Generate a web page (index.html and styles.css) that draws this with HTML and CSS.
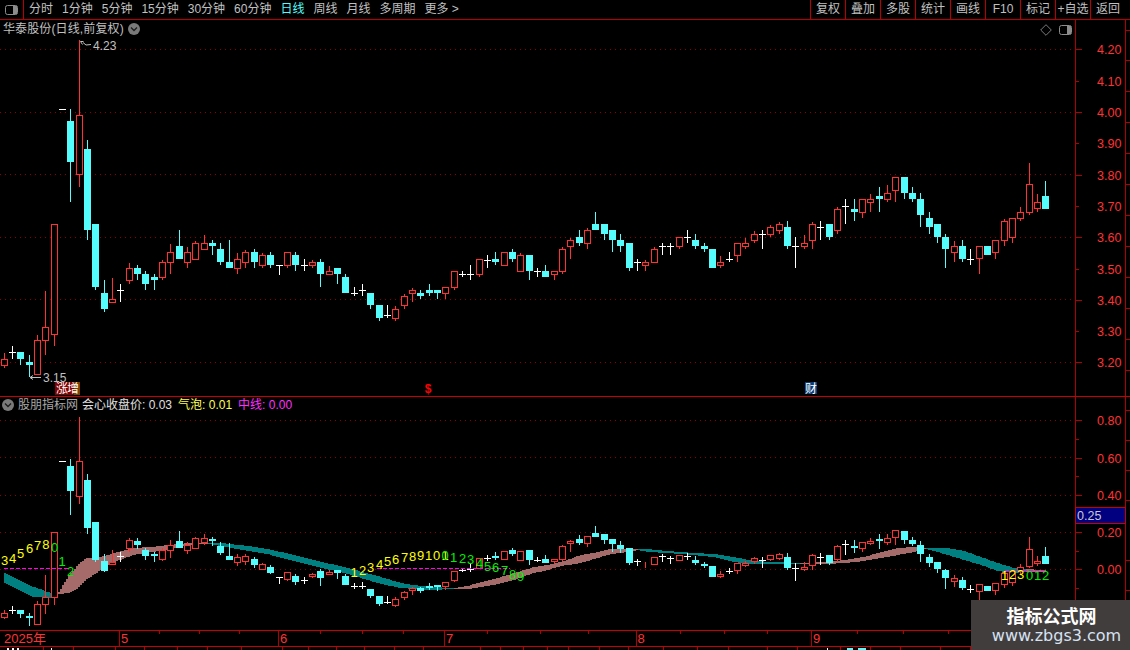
FILE: index.html
```html
<!DOCTYPE html>
<html lang="zh-CN">
<head>
<meta charset="utf-8">
<title>华泰股份</title>
<link rel="stylesheet" href="styles.css">
</head>
<body>
<div class="page">
  <header class="toolbar">
    <div class="toolbar-icon">
      <svg class="toggle" viewBox="0 0 13 10"><rect class="toggle-box" x="0.5" y="0.5" width="12" height="9" rx="2"/><rect class="toggle-fill" x="8" y="1" width="4" height="8"/></svg>
    </div>
    <nav class="periods">
      <span>分时</span><span>1分钟</span><span>5分钟</span><span>15分钟</span><span>30分钟</span><span>60分钟</span>
      <span class="active">日线</span><span>周线</span><span>月线</span><span>多周期</span><span>更多 &gt;</span>
    </nav>
    <div class="tools">
      <span>复权</span><span>叠加</span><span>多股</span><span>统计</span><span>画线</span><span>F10</span><span>标记</span><span>+自选</span><span>返回</span>
    </div>
  </header>

  <section class="pane pane-upper">
    <svg id="upper" class="chart" viewBox="0 20 1130 376" width="1130" height="376"></svg>
    <div class="pane-title title-upper">
      <span class="stock-name">华泰股份(日线,前复权)</span>
      <svg class="chev" viewBox="0 0 12 12"><circle class="chev-bg" cx="6" cy="6" r="6"/><path class="chev-mark" d="M3 4.5 6 7.5 9 4.5"/></svg>
    </div>
    <div class="pane-tools">
      <svg class="diamond" viewBox="0 0 12 12"><path class="diamond-mark" d="M6 .7 11.3 6 6 11.3 .7 6Z"/></svg>
      <svg class="toggle" viewBox="0 0 13 10"><rect class="toggle-box" x="0.5" y="0.5" width="12" height="9" rx="2"/><rect class="toggle-fill" x="8" y="1" width="4" height="8"/></svg>
    </div>
  </section>

  <section class="pane pane-lower">
    <svg id="lower" class="chart" viewBox="0 397 1130 233" width="1130" height="233"></svg>
    <div class="pane-title title-lower">
      <svg class="chev" viewBox="0 0 12 12"><circle class="chev-bg" cx="6" cy="6" r="6"/><path class="chev-mark" d="M3 4.5 6 7.5 9 4.5"/></svg>
      <span class="ind-name">股朋指标网</span>
      <span class="ind-value">会心收盘价: 0.03</span>
      <span class="ind-yellow">气泡: 0.01</span>
      <span class="ind-magenta">中线: 0.00</span>
    </div>
  </section>

  <section class="date-axis">
    <svg id="dates" class="chart" viewBox="0 631 1130 15" width="1130" height="15"></svg>
  </section>
  <svg id="status" class="chart" viewBox="0 647 1130 3" width="1130" height="3"></svg>

  <aside class="watermark">
    <div class="wm-title">指标公式网</div>
    <div class="wm-url">www.zbgs3.com</div>
  </aside>
</div>
<script src="script.js"></script>
</body>
</html>
```

FILE: styles.css
```css
* { box-sizing: border-box; }
html, body { margin: 0; padding: 0; background: #000; }
body {
  width: 1130px;
  height: 650px;
  overflow: hidden;
  font-family: "Liberation Sans", "Noto Sans CJK SC", sans-serif;
  font-size: 12px;
  color: #c0c0c0;
}
.page { position: relative; width: 1130px; height: 650px; display: flex; flex-direction: column; }

.toolbar { display: flex; align-items: stretch; height: 20px; border-bottom: 1px solid #b80000; flex: none; }
.toolbar-icon { width: 24px; border-right: 1px solid #b80000; display: flex; align-items: center; justify-content: center; padding-right: 1px; }
.toggle { width: 13px; height: 10px; display: block; }
.toggle-box { fill: #000; stroke: #8c8c8c; stroke-width: 1; }
.toggle-fill { fill: #8c8c8c; }
.periods { display: flex; align-items: center; gap: 9px; padding-left: 5px; white-space: nowrap; line-height: 19px; }
.periods .active { color: #54fcfc; }
.tools { margin-left: auto; margin-right: 5px; display: flex; }
.tools span { width: 35px; border-left: 1px solid #b80000; text-align: center; line-height: 19px; white-space: nowrap; }

.pane { position: relative; flex: none; border-bottom: 1px solid #c80000; }
.pane-upper { height: 377px; }
.pane-lower { height: 234px; }
.chart { display: block; }
.pane-title { position: absolute; left: 0; display: flex; align-items: center; white-space: nowrap; line-height: 16px; }
.title-upper { top: 1px; padding-left: 3px; gap: 4px; }
.stock-name { letter-spacing: 0.12px; }
.title-lower { top: 0; padding-left: 2px; gap: 4px; }
.chev { width: 12px; height: 12px; flex: none; }
.chev-bg { fill: #7a7a7a; }
.chev-mark { fill: none; stroke: #1c1c1c; stroke-width: 1.3; }
.ind-name { color: #a8a8a8; }
.ind-value { color: #e0e0e0; }
.ind-yellow { color: #ffff54; margin-left: 2px; }
.ind-magenta { color: #ff30ff; margin-left: 2px; }
.pane-tools { position: absolute; top: 4px; right: 58px; display: flex; align-items: center; gap: 7px; }
.diamond { width: 12px; height: 12px; }
.diamond-mark { fill: none; stroke: #7a7a7a; stroke-width: 1; }

.date-axis { flex: none; height: 16px; border-bottom: 1px solid #c80000; }
.watermark {
  position: absolute; left: 971px; top: 600px; width: 159px; height: 50px;
  background: #423d3d; text-align: center; color: #fff;
}
.wm-title { font-family: "Noto Sans CJK SC", sans-serif; font-weight: 700; font-size: 18px; line-height: 22px; margin-top: 4px; margin-left: 2px; }
.wm-url { font-family: "DejaVu Sans", sans-serif; font-size: 16px; line-height: 20px; color: #d6e2f2; margin-left: 12px; white-space: nowrap; }

/* chart marks */
.red-wick, .red-dash { fill: #ff3232; }
.red-body { fill: #000; stroke: #ff3232; stroke-width: 1; }
.cyan { fill: #54fcfc; }
.white { fill: #fff; }
.grid { stroke: #8c0000; stroke-width: 1; stroke-dasharray: 1 4; }
.axis { stroke: #b00000; stroke-width: 1; }
.axis-label { fill: #ff3232; font-size: 12.5px; font-family: "Liberation Sans", sans-serif; }
.date-label { fill: #ff3232; font-size: 13px; font-family: "Liberation Sans", "Noto Sans CJK SC", sans-serif; }
.note { fill: #c0c0c0; font-size: 12px; font-family: "Liberation Sans", sans-serif; }
.note-line { fill: none; stroke: #c0c0c0; stroke-width: 1; }
.band-teal { fill: #008080; }
.band-pink { fill: #a56b6b; }
.mid-dash { stroke: #ff00ff; stroke-width: 1; stroke-dasharray: 4 2; }
.digit { font-size: 13px; font-family: "Liberation Sans", sans-serif; text-anchor: middle; }
.digit-y { fill: #ffff00; }
.digit-g { fill: #00f000; }
.tag-red { fill: #820000; }
.tag-brown { fill: #804000; }
.tag-blue { fill: #0a3c78; }
.tag-text { fill: #fff; font-size: 12px; font-family: "Noto Sans CJK SC", sans-serif; }
.tag-dollar { fill: #ff0000; font-size: 12px; font-weight: 700; font-family: "Liberation Mono", monospace; text-anchor: middle; }
.value-box { fill: #000080; stroke: #c80000; stroke-width: 1; }
.value-text { fill: #c8c8c8; font-size: 12.5px; font-family: "Liberation Sans", sans-serif; }
```

FILE: script.js
```js
(function () {
var NS = "http://www.w3.org/2000/svg";
function el(svg, name, cls, attrs, text) {
  var n = document.createElementNS(NS, name);
  if (cls) n.setAttribute("class", cls);
  for (var k in attrs) n.setAttribute(k, attrs[k]);
  if (text !== undefined) n.textContent = text;
  svg.appendChild(n);
  return n;
}
function colX(i) { return Math.floor(4 + i * 25 / 3); }

/* r/c: [kind, bodyTop, bodyBottom, high, low]  w: [kind, bar, high, low]  d: [kind, y] */
var upperData = [
["r",359,366,353,368],["w",352,346,359],["c",352,359,352,365],["c",362,365,355,377],["r",340,375,335,375],["r",327,341,291,355],["r",224,335,224,346],["d",109],["c",121,162,109,202],["r",115,175,40,187],
["c",149,230,140,240],["c",224,287,224,290],["c",293,309,280,312],["r",299,303,278,303],["w",290,284,302],["r",268,281,263,284],["c",268,274,265,280],["c",274,284,271,290],["c",277,280,274,290],["r",262,278,260,280],
["r",252,263,244,274],["c",246,259,230,259],["r",252,263,247,268],["r",243,260,241,260],["r",243,250,235,250],["c",243,246,240,255],["c",249,262,243,265],["c",262,268,240,268],["r",259,269,253,274],["r",252,263,250,268],
["c",252,262,249,268],["r",255,266,253,268],["c",255,265,252,268],["w",265,265,275],["r",252,266,252,268],["c",255,265,252,271],["w",265,259,271],["r",262,266,260,268],["c",262,274,259,287],["r",271,275,266,275],
["c",268,274,268,284],["c",277,293,274,293],["w",293,287,296],["w",290,284,296],["c",293,305,293,309],["c",305,318,305,321],["w",315,305,318],["r",309,319,306,321],["r",296,306,294,309],["r",290,294,288,302],
["c",293,296,290,299],["c",290,293,284,296],["c",290,293,290,299],["r",287,294,287,299],["r",271,288,271,290],["w",274,271,277],["w",274,265,280],["r",259,275,259,277],["w",260,255,268],["c",259,262,252,265],
["r",252,266,252,266],["c",252,259,249,262],["r",255,272,253,272],["c",255,271,255,280],["w",271,268,277],["c",271,277,265,277],["r",271,275,271,280],["r",249,272,247,274],["r",240,247,238,259],["c",237,243,230,246],
["r",230,244,228,249],["c",224,230,212,230],["c",224,234,224,240],["c",230,240,230,252],["c",240,246,234,252],["c",243,268,243,271],["w",262,259,271],["r",262,266,260,271],["r",249,263,247,263],["w",246,243,255],
["w",246,243,255],["r",237,247,237,249],["w",237,230,243],["c",240,246,234,249],["c",246,249,243,252],["c",249,268,249,268],["r",262,266,256,268],["w",259,252,262],["r",243,256,243,262],["r",243,247,238,249],
["r",234,241,231,243],["w",234,230,249],["r",227,235,225,237],["r",224,231,222,234],["c",227,246,221,249],["w",246,237,268],["r",243,247,235,249],["r",224,241,222,249],["w",227,221,240],["c",224,237,224,240],
["r",209,231,207,234],["w",206,199,224],["c",209,212,199,221],["r",199,213,199,218],["r",199,203,194,212],["c",196,199,187,212],["r",193,200,185,202],["r",177,191,177,202],["c",177,193,177,199],["c",193,199,187,202],
["c",199,215,193,227],["c",218,227,212,234],["c",224,237,224,243],["c",237,249,234,268],["r",246,253,241,262],["c",246,259,240,262],["w",259,249,265],["r",246,259,246,274],["c",246,255,246,255],["r",240,253,240,259],
["r",221,241,219,246],["r",218,238,218,243],["r",212,219,207,221],["r",184,213,163,215],["r",202,209,194,212],["c",196,209,181,209]
];
var lowerData = [
["r",613,618,610,619],["w",610,606,614],["c",610,614,610,618],["c",616,618,613,626],["r",604,625,601,625],["r",597,605,575,614],["r",532,598,532,605],["d",461],["c",466,491,459,515],["r",461,497,417,504],
["c",480,528,474,534],["c",522,560,522,562],["c",561,571,554,572],["r",562,565,550,565],["w",556,552,562],["r",540,549,538,552],["c",541,545,538,549],["c",550,556,548,560],["c",554,556,552,562],["r",550,560,548,561],
["r",545,551,540,558],["c",541,548,531,548],["r",545,551,542,554],["r",538,549,537,549],["r",538,543,534,545],["c",539,541,537,546],["c",546,553,542,555],["c",556,560,543,560],["r",557,563,554,566],["r",556,562,554,565],
["c",559,565,557,568],["r",564,570,563,570],["c",567,573,565,574],["w",577,577,584],["r",572,580,572,581],["c",576,582,574,585],["w",580,577,584],["r",574,577,573,578],["c",571,578,569,586],["r",572,575,570,575],
["c",570,573,570,579],["c",576,585,574,585],["w",586,583,589],["w",586,582,589],["c",589,596,589,598],["c",596,604,596,606],["w",602,596,604],["r",599,606,597,607],["r",592,598,591,600],["r",588,591,587,595],
["c",588,591,587,593],["c",586,588,583,590],["c",585,587,585,591],["r",582,587,582,590],["r",571,581,571,582],["w",570,568,572],["w",569,564,572],["r",558,569,558,569],["w",558,555,561],["c",556,558,552,560],
["r",551,560,551,560],["c",550,554,548,556],["r",551,561,551,561],["c",550,560,550,565],["w",560,557,562],["c",559,563,555,563],["r",559,562,559,564],["r",546,560,545,561],["r",541,544,540,552],["c",539,543,535,545],
["r",536,544,536,547],["c",533,537,526,537],["c",534,540,534,544],["c",539,544,539,552],["c",545,549,541,553],["c",548,563,548,565],["w",561,559,566],["r",563,564,562,568],["r",557,565,557,565],["w",556,554,562],
["w",558,556,564],["r",555,561,555,561],["w",556,553,560],["c",560,563,556,565],["c",564,566,562,568],["c",566,577,566,577],["r",574,577,571,578],["w",571,568,574],["r",563,571,563,574],["r",563,566,561,567],
["r",558,562,557,564],["w",560,557,568],["r",555,560,555,561],["r",554,559,553,560],["c",557,568,553,570],["w",568,563,581],["r",567,570,562,571],["r",555,566,554,570],["w",557,553,565],["c",555,563,555,565],
["r",546,560,545,562],["w",544,540,555],["c",546,548,540,553],["r",542,549,542,552],["r",541,544,538,545],["c",539,541,534,549],["r",538,543,534,545],["r",530,538,530,545],["c",531,540,531,544],["c",540,544,537,546],
["c",545,554,541,562],["c",557,563,554,567],["c",562,569,562,573],["c",570,578,569,589],["r",578,582,575,587],["c",580,588,577,590],["w",589,585,593],["r",584,592,584,600],["c",586,591,586,591],["r",583,591,583,595],
["r",573,585,571,588],["r",571,583,571,586],["r",567,571,564,574],["r",549,567,537,568],["r",561,564,556,566],["c",556,564,547,564]
];
/* indicator band key points: x, top, bottom */
var band = [
[4,573,583],[33,587,597],[50,593,598],[58,592,594],[67,577,593],[77,565,588],[85,558,580],[100,557,570],[113,553,562],[133,548,555],[150,547,552],[167,545,550],[187,543,545],[207,543,544],
[220,543,546],[247,546,551],[267,549,554],[280,552,558],[313,560,566],[347,568,574],[380,577,584],[400,583,588],[413,585,589],[430,587,590],[453,588,589],
[467,586,589],[480,582,587],[497,578,584],[513,573,580],[533,567,573],[547,565,570],[560,562,566],[580,555,563],[593,553,559],[610,549,554],[627,549,552],[637,549,550],
[647,549,552],[667,551,553],[693,553,555],[713,554,557],[733,557,562],[753,561,564],[773,562,564],[793,563,564],[827,562,564],
[843,560,563],[863,557,561],[880,552,558],[897,548,555],[913,547,552],[923,548,549],
[930,548,550],[947,548,555],[963,551,560],[980,557,565],[997,563,571],[1013,568,573],[1020,569,572],[1045,570,572]
];
var pinkSpans = [[55,207],[453,637],[800,925],[1025,1046]];

function drawCandles(svg, data) {
  data.forEach(function (d, i) {
    var x = colX(i), k = d[0];
    if (k === "d") { el(svg, "rect", "white", {x: x - 3, y: d[1], width: 7, height: 1}); return; }
    if (k === "w") {
      el(svg, "rect", "white", {x: x, y: d[2], width: 1, height: d[3] - d[2]});
      el(svg, "rect", "white", {x: x - 3, y: d[1], width: 7, height: 1});
      return;
    }
    var cls = k === "r" ? "red-wick" : "cyan";
    el(svg, "rect", cls, {x: x, y: d[3], width: 1, height: d[4] - d[3]});
    if (k === "r") el(svg, "rect", "red-body", {x: x - 2.5, y: d[1] + 0.5, width: 6, height: d[2] - d[1] - 1});
    else el(svg, "rect", "cyan", {x: x - 3, y: d[1], width: 7, height: d[2] - d[1]});
  });
}
function hline(svg, cls, x1, x2, y) { el(svg, "line", cls, {x1: x1, x2: x2, y1: y, y2: y}); }
function vline(svg, cls, x, y1, y2) { el(svg, "line", cls, {x1: x, x2: x, y1: y1, y2: y2}); }

/* ---- upper pane ---- */
var up = document.getElementById("upper");
[49, 112, 174, 237, 299, 362].forEach(function (y) { hline(up, "grid", 0, 1075, y + 0.5); });
vline(up, "axis", 1075.5, 20, 396);
vline(up, "axis", 1125.5, 20, 396);
var upperLabels = ["4.20","4.10","4.00","3.90","3.80","3.70","3.60","3.50","3.40","3.30","3.20"];
upperLabels.forEach(function (t, i) {
  var y = Math.round(49.4 + i * 31.3);
  hline(up, "axis", 1076, i % 2 ? 1079 : 1082, y + 0.5);
  el(up, "text", "axis-label", {x: 1097, y: y + 5}, t);
});
[30, 60, 91, 122, 153, 184, 215, 246, 277, 308, 339, 370].forEach(function (y) { hline(up, "axis", 1126, 1130, y + 0.5); });
drawCandles(up, upperData);
el(up, "path", "note-line", {d: "M80.5 41.5h3M80.5 41.5l2 3M83 42.5l3 2.5 5-.5"});
el(up, "text", "note", {x: 93, y: 50}, "4.23");
el(up, "path", "note-line", {d: "M30 377.5h11M30 377.5l3-2M30 377.5l3 2"});
el(up, "text", "note", {x: 43, y: 382}, "3.15");
el(up, "rect", "tag-red", {x: 55, y: 382, width: 22, height: 13});
el(up, "rect", "tag-brown", {x: 74, y: 382, width: 6, height: 13});
el(up, "text", "tag-text", {x: 56, y: 393}, "涨");
el(up, "text", "tag-text", {x: 67, y: 393}, "增");
el(up, "text", "tag-dollar", {x: 428, y: 393}, "$");
el(up, "rect", "tag-blue", {x: 805, y: 382, width: 12, height: 12});
el(up, "text", "tag-text", {x: 805, y: 393}, "财");

/* ---- lower pane ---- */
var low = document.getElementById("lower");
[420, 457, 495, 532, 569].forEach(function (y) { hline(low, "grid", 0, 1075, y + 0.5); });
vline(low, "axis", 1075.5, 397, 630);
vline(low, "axis", 1125.5, 397, 630);
["0.80","0.60","0.40","0.20","0.00"].forEach(function (t, i) {
  var y = Math.round(420.3 + i * 37.2);
  hline(low, "axis", 1076, 1082, y + 0.5);
  el(low, "text", "axis-label", {x: 1097, y: y + 5}, t);
});
[439, 476, 514, 551, 588, 625].forEach(function (y) { hline(low, "axis", 1076, 1079, y + 0.5); });
[410, 440, 470, 500, 560, 590, 620].forEach(function (y) { hline(low, "axis", 1126, 1130, y + 0.5); });

function interp(x) {
  for (var i = 0; i < band.length - 1; i++) {
    var a = band[i], b = band[i + 1];
    if (x >= a[0] && x <= b[0]) {
      var f = (x - a[0]) / (b[0] - a[0]);
      return [a[1] + (b[1] - a[1]) * f, a[2] + (b[2] - a[2]) * f];
    }
  }
  return null;
}
for (var bx = 4; bx < 1046; bx += 2) {
  var v = interp(bx);
  if (!v) continue;
  var pink = pinkSpans.some(function (s) { return bx >= s[0] && bx < s[1]; });
  var bandTop = Math.round(v[0]), bandBot = Math.max(Math.round(v[1]), bandTop + 1);
  el(low, "rect", pink ? "band-pink" : "band-teal", {x: bx, y: bandTop, width: 2, height: bandBot - bandTop});
}
drawCandles(low, lowerData);
hline(low, "mid-dash", 4, 68, 568.5);
hline(low, "mid-dash", 377, 510, 568.5);
hline(low, "mid-dash", 1005, 1046, 570.5);

var digits = [
[4.7,560,"3","y"],[12.5,558,"4","y"],[20.5,553,"5","y"],[29.5,548,"6","y"],[37.5,545,"7","y"],[45.8,544,"8","y"],[54.5,547,"0","g"],[62,561,"1","g"],[70.5,571,"2","g"],
[354,572,"1","y"],[362.5,570,"2","y"],[370.5,567,"3","y"],[379.5,564,"4","y"],[387.5,561,"5","y"],[395.5,559,"6","y"],[404.5,557,"7","y"],[412.5,556,"8","y"],[420.5,555,"9","y"],[428.7,555,"1","y"],[436.7,555,"0","y"],[445,555,"1","y"],[445,555,"0","g"],
[453.5,557,"1","g"],[462.5,558,"2","g"],[470.5,559,"3","g"],[479.5,563,"4","g"],[487.5,566,"5","g"],[495.5,567,"6","g"],[504.5,570,"7","g"],[512.5,574,"8","g"],[520.5,576,"9","g"],
[1004.5,575,"1","y"],[1012.5,574,"2","y"],[1020.5,574,"3","y"],[1029.5,575,"0","g"],[1037.5,575,"1","g"],[1045.5,575,"2","g"]
];
digits.forEach(function (d) {
  el(low, "text", "digit digit-" + d[3], {x: d[0], y: d[1] + 4.7}, d[2]);
});
el(low, "rect", "value-box", {x: 1075.5, y: 507.5, width: 50, height: 16});
el(low, "text", "value-text", {x: 1077, y: 520}, "0.25");

/* ---- date axis ---- */
var dt = document.getElementById("dates");
[[4,"2025年"],[121,"5"],[280,"6"],[446,"7"],[637.5,"8"],[813,"9"]].forEach(function (d) {
  el(dt, "text", "date-label", {x: d[0], y: 643}, d[1]);
});
[119, 278, 444, 636, 811].forEach(function (x) { vline(dt, "axis", x + 0.5, 631, 646); });
vline(dt, "axis", 1075.5, 631, 646);
vline(dt, "axis", 1125.5, 631, 646);
[159, 199, 239, 320, 362, 403, 487, 540, 588, 680, 724, 767, 857, 903, 948].forEach(function (x) {
  vline(dt, "axis", x + 0.5, 631, 634);
});

/* ---- bottom strip ---- */
var st = document.getElementById("status");
[43, 73, 115, 144, 177, 207, 241, 282, 308, 336, 364, 394, 423, 480, 500, 523, 547, 568, 599, 628, 663, 697, 728, 767, 797, 840, 870, 900, 940, 970].forEach(function (x) {
  vline(st, "axis", x + 0.5, 647, 650);
});
[[7,2],[12,2],[17,2],[51,1],[827,1],[847,6],[858,8]].forEach(function (p, i) {
  el(st, "rect", i > 4 ? "cyan" : "white", {x: p[0], y: 648, width: p[1], height: 2});
});
})();
```
